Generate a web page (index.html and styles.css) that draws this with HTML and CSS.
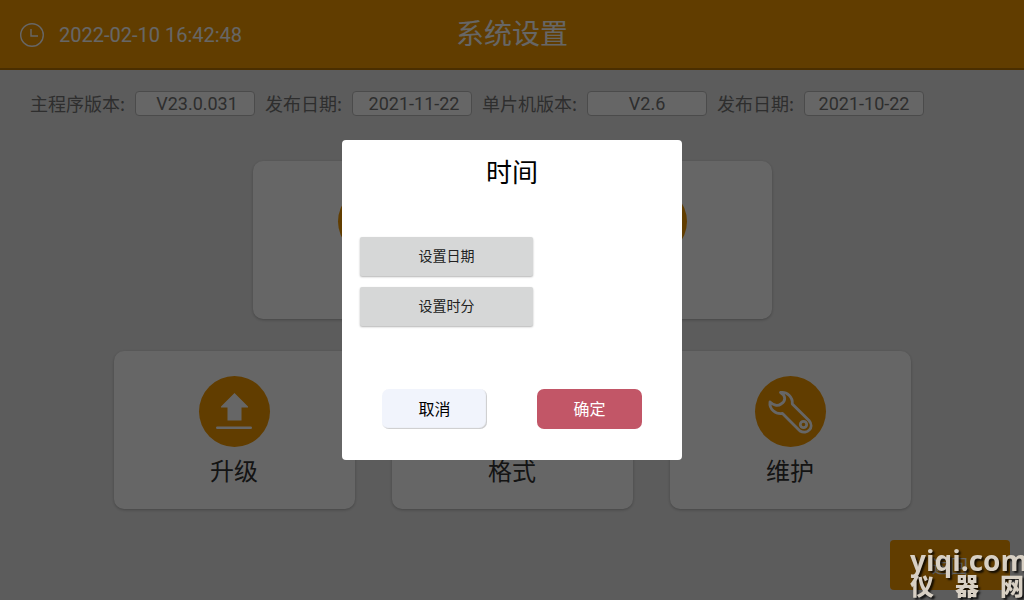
FILE: index.html
```html
<!DOCTYPE html>
<html lang="zh-CN">
<head>
    <meta charset="UTF-8">
    <meta name="viewport" content="width=device-width, initial-scale=1.0">
    <title>系统设置</title>
    <link rel="stylesheet" href="styles.css">
</head>
<body>
    <header class="header">
        <div class="clock">
            <svg class="clock-icon" viewBox="0 0 24 24" aria-hidden="true">
                <circle cx="12" cy="12" r="11.3"/>
                <path d="M11 6v7h7"/>
            </svg>
            <time>2022-02-10 16:42:48</time>
        </div>
        <h1 class="title">系统设置</h1>
    </header>

    <main>
        <div class="versions">
            <label for="main-version">主程序版本:</label>
            <input class="indent" id="main-version" type="text" value="V23.0.031" readonly>
            <label for="main-date">发布日期:</label>
            <input class="indent" id="main-date" type="text" value="2021-11-22" readonly>
            <label for="mcu-version">单片机版本:</label>
            <input id="mcu-version" type="text" value="V2.6" readonly>
            <label for="mcu-date">发布日期:</label>
            <input id="mcu-date" type="text" value="2021-10-22" readonly>
        </div>

        <div class="cards">
            <div class="card-row">
                <button type="button" class="card"><span class="card-icon"></span></button>
                <button type="button" class="card"><span class="card-icon"></span></button>
            </div>
            <div class="card-row">
                <button type="button" class="card">
                    <span class="card-icon">
                        <svg viewBox="0 0 71 71" aria-hidden="true">
                            <path class="fill" d="M35.500 17L49 30.500V31.500H42.500V44.500H28.500V31.500H22V30.500Z"/>
                            <rect class="fill" x="17" y="50.500" width="36" height="2.600" rx="1.300"/>
                        </svg>
                    </span>
                    升级
                </button>
                <button type="button" class="card">
                    <span class="card-icon"></span>
                    格式
                </button>
                <button type="button" class="card">
                    <span class="card-icon">
                        <svg viewBox="0 0 71 71" aria-hidden="true">
                            <path class="line" d="M25.500 16.500C32 15.500 38 21 37.300 28L54 44.500C60 51.500 52 59 45 55L27.500 37.500C20.500 38.500 14 33 15 26C18 29 22.500 30.500 26 28C31.500 24.500 30.500 19.500 25.500 16.500Z"/>
                            <circle class="line" cx="48.500" cy="48.500" r="3.200"/>
                        </svg>
                    </span>
                    维护
                </button>
            </div>
        </div>
    </main>

    <button type="button" class="back">返回</button>

    <div class="overlay">
        <section class="dialog" role="dialog" aria-labelledby="dialog-title">
            <h2 id="dialog-title">时间</h2>
            <div class="options">
                <button type="button">设置日期</button>
                <button type="button">设置时分</button>
            </div>
            <div class="actions">
                <button type="button" class="cancel">取消</button>
                <button type="button" class="confirm">确定</button>
            </div>
        </section>
    </div>

    <div class="watermark">
        <span>yiqi.com</span>
        <div class="watermark-cn"><span>仪</span><span>器</span><span>网</span></div>
    </div>
</body>
</html>
```

FILE: styles.css
```css
* {
    box-sizing: border-box;
}
body {
    margin: 0;
    min-height: 100vh;
    overflow: hidden;
    background: #e6e6e6;
    font-family: Roboto, "Noto Sans CJK SC", sans-serif;
}
button, input {
    font-family: inherit;
}
h1, h2 {
    margin: 0;
    font-weight: 400;
}
.header {
    display: grid;
    grid-template-columns: 1fr auto 1fr;
    align-items: center;
    height: 70px;
    padding: 2px 20px 0;
    background: #f39800;
    border-bottom: 2px solid #b87300;
    color: #fff;
}
.clock {
    display: flex;
    align-items: center;
    gap: 15px;
    font-size: 20px;
}
.clock-icon {
    width: 24px;
    height: 24px;
    fill: none;
    stroke: #fff;
    stroke-width: 1.4;
}
.title {
    font-size: 28px;
    line-height: 40px;
}
.versions {
    display: flex;
    align-items: center;
    gap: 10px;
    padding: 20px 30px 0;
    color: #737373;
    font-size: 18px;
    line-height: 26px;
    white-space: nowrap;
}
.versions label {
    font-family: "Noto Sans CJK SC", sans-serif;
}
.versions input {
    width: 120px;
    height: 25px;
    padding: 0;
    border: 1px solid #bbb;
    border-radius: 4px;
    background: #fff;
    color: #737373;
    font-size: 18px;
    text-align: center;
}
.versions .indent {
    padding-left: 4px;
}
.cards {
    display: flex;
    flex-direction: column;
    gap: 32px;
    padding-top: 45px;
}
.card-row {
    display: flex;
    justify-content: center;
    gap: 37px;
}
.card {
    display: flex;
    flex-direction: column;
    align-items: center;
    gap: 5px;
    width: 241px;
    height: 158px;
    padding: 25px 0 0;
    border: 0;
    border-radius: 10px;
    background: #fff;
    box-shadow: 0 1px 3px rgba(0,0,0,0.25);
    color: #333;
    font-size: 24px;
}
.card-icon {
    width: 71px;
    height: 71px;
    border-radius: 50%;
    background: #f39800;
}
.card-icon svg {
    display: block;
}
.fill {
    fill: #fff;
}
.line {
    fill: none;
    stroke: #fff;
    stroke-width: 2.8;
    stroke-linejoin: round;
}
.back {
    position: fixed;
    right: 14px;
    bottom: 10px;
    width: 120px;
    height: 50px;
    border: 0;
    border-radius: 4px;
    background: #f39800;
    color: #fff;
    font-size: 18px;
}
.overlay {
    position: fixed;
    inset: 0;
    display: flex;
    align-items: center;
    justify-content: center;
    background: rgba(0,0,0,0.6);
}
.dialog {
    width: 340px;
    height: 320px;
    padding: 13px 18px;
    border-radius: 4px;
    background: #fff;
    color: #000;
}
.dialog h2 {
    font-size: 26px;
    line-height: 40px;
    text-align: center;
}
.options {
    display: flex;
    flex-direction: column;
    gap: 11px;
    padding: 44px 0 63px;
}
.options button {
    width: 173px;
    height: 39px;
    padding: 0 0 3px;
    border: 0;
    border-radius: 2px;
    background: #d6d7d7;
    box-shadow: 0 1px 2px rgba(0,0,0,0.3);
    color: #212121;
    font-size: 14px;
}
.actions {
    display: flex;
    justify-content: space-between;
    padding: 0 22px;
}
.actions button {
    width: 105px;
    height: 40px;
    padding: 0 0 2px;
    border: 0;
    border-radius: 7px;
    font-size: 16px;
}
.actions .cancel {
    background: #f1f4fc;
    box-shadow: inset -1px -1px 1px #ccc;
    color: #000;
}
.actions .confirm {
    background: #c25667;
    color: #fff;
}
.watermark {
    position: fixed;
    left: calc(100% - 114px);
    bottom: 0;
    color: #d8d0c4;
    font-family: "Open Sans", "Noto Sans CJK SC", sans-serif;
    font-size: 28px;
    font-weight: 700;
    line-height: 28px;
    text-shadow: 2px 2px 2px rgba(0,0,0,0.8);
}
.watermark-cn {
    display: flex;
    gap: 21px;
    padding-bottom: 3px;
    font-size: 24px;
    font-weight: 900;
    line-height: 23px;
}
```
